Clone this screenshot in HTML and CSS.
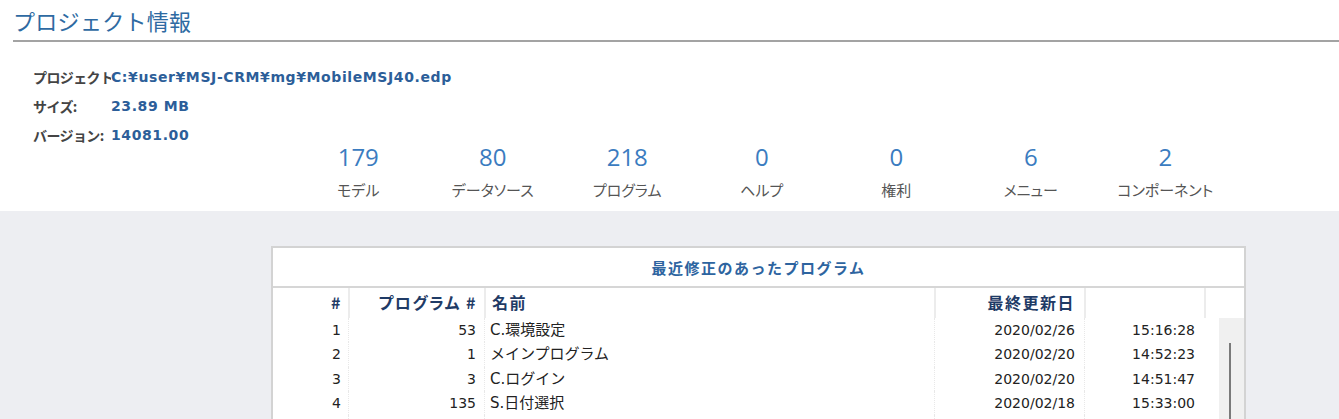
FILE: index.html
```html
<!DOCTYPE html>
<html lang="ja">
<head>
<meta charset="utf-8">
<title>プロジェクト情報</title>
<link rel="stylesheet" href="styles.css">
</head>
<body>
<div class="top">
  <h1 class="title">プロジェクト情報</h1>
  <div class="info">
    <div class="info-row"><span class="info-label">プロジェクト:</span><span class="info-value">C:¥user¥MSJ-CRM¥mg¥MobileMSJ40.edp</span></div>
    <div class="info-row"><span class="info-label">サイズ:</span><span class="info-value">23.89 MB</span></div>
    <div class="info-row"><span class="info-label">バージョン:</span><span class="info-value">14081.00</span></div>
  </div>
  <div class="stats">
    <div class="stat"><div class="stat-num">179</div><div class="stat-label">モデル</div></div>
    <div class="stat"><div class="stat-num">80</div><div class="stat-label">データソース</div></div>
    <div class="stat"><div class="stat-num">218</div><div class="stat-label">プログラム</div></div>
    <div class="stat"><div class="stat-num">0</div><div class="stat-label">ヘルプ</div></div>
    <div class="stat"><div class="stat-num">0</div><div class="stat-label">権利</div></div>
    <div class="stat"><div class="stat-num">6</div><div class="stat-label">メニュー</div></div>
    <div class="stat"><div class="stat-num">2</div><div class="stat-label">コンポーネント</div></div>
  </div>
</div>
<div class="bottom">
  <div class="panel">
    <div class="panel-title">最近修正のあったプログラム</div>
    <div class="thead">
      <div class="th c1">#</div>
      <div class="th c2">プログラム #</div>
      <div class="th c3 left">名前</div>
      <div class="th c4">最終更新日</div>
      <div class="th c5"></div>
      <div class="th c6"></div>
    </div>
    <div class="tbody-wrap">
      <div class="tbody">
        <div class="tr"><div class="td c1">1</div><div class="td c2">53</div><div class="td c3 left">C.環境設定</div><div class="td c4">2020/02/26</div><div class="td c5">15:16:28</div></div>
        <div class="tr"><div class="td c1">2</div><div class="td c2">1</div><div class="td c3 left">メインプログラム</div><div class="td c4">2020/02/20</div><div class="td c5">14:52:23</div></div>
        <div class="tr"><div class="td c1">3</div><div class="td c2">3</div><div class="td c3 left">C.ログイン</div><div class="td c4">2020/02/20</div><div class="td c5">14:51:47</div></div>
        <div class="tr"><div class="td c1">4</div><div class="td c2">135</div><div class="td c3 left">S.日付選択</div><div class="td c4">2020/02/18</div><div class="td c5">15:33:00</div></div>
        <div class="tr"><div class="td c1">5</div><div class="td c2">42</div><div class="td c3 left">C.簡易日報</div><div class="td c4">2020/02/18</div><div class="td c5">15:20:11</div></div>
      </div>
      <div class="scrollbar"><div class="thumb"></div></div>
    </div>
  </div>
</div>
</body>
</html>
```
FILE: styles.css
```css
* { box-sizing: border-box; }
html, body { margin: 0; padding: 0; }
body {
  width: 1339px;
  height: 419px;
  overflow: hidden;
  background: #edeef2;
  font-family: "DejaVu Sans", "Noto Sans CJK JP", sans-serif;
}
.top {
  background: #ffffff;
  height: 211px;
}
.title {
  margin: 0 0 0 13px;
  padding-top: 4px;
  height: 42px;
  font-family: "Noto Sans CJK JP", sans-serif;
  font-weight: normal;
  font-size: 22px;
  line-height: 32px;
  color: #2e6aa2;
  border-bottom: 2px solid #a3a3a3;
  letter-spacing: 0.3px;
}
.info {
  margin-top: 20px;
  padding-left: 33px;
}
.info-row {
  display: flex;
  height: 29px;
  align-items: center;
}
.info-label {
  flex: 0 0 78px;
  width: 78px;
  white-space: nowrap;
  overflow: hidden;
  font-family: "Noto Sans CJK JP", sans-serif;
  font-weight: bold;
  font-size: 14px;
  color: #444;
  letter-spacing: -0.6px;
}
.info-value {
  font-family: "DejaVu Sans", sans-serif;
  font-weight: bold;
  font-size: 14px;
  letter-spacing: 0.6px;
  color: #2c5e99;
}
.stats {
  display: flex;
  margin-left: 291px;
  margin-top: -8px;
}
.stat {
  width: 134.5px;
  text-align: center;
}
.stat-num {
  font-family: "Open Sans", sans-serif;
  font-size: 24px;
  line-height: 32px;
  color: #3b7cc0;
}
.stat-label {
  margin-top: 7px;
  font-family: "Noto Sans CJK JP", sans-serif;
  font-feature-settings: "palt";
  font-size: 15px;
  line-height: 20px;
  color: #555;
}
.bottom {
  padding: 35px 0 0 271px;
}
.panel {
  width: 975px;
  height: 200px;
  background: #fff;
  border: 2px solid #d3d3d3;
  border-bottom: none;
}
.panel-title {
  height: 40px;
  line-height: 40px;
  text-align: center;
  font-family: "Noto Sans CJK JP", sans-serif;
  font-weight: bold;
  font-size: 15px;
  color: #2d64a0;
  border-bottom: 2px solid #d6d6d6;
  letter-spacing: 1.5px;
}
.thead {
  display: grid;
  grid-template-columns: 75px 136px 450px 150px 120px 40px;
  height: 30px;
}
.th {
  font-family: "Noto Sans CJK JP", sans-serif;
  font-feature-settings: "palt";
  font-weight: bold;
  font-size: 16px;
  letter-spacing: 1.5px;
  color: #1f3b66;
  line-height: 28px;
  text-align: right;
  border-left: 2px solid #ececec;
}
.th.c1 { border-left: none; padding-right: 6px; }
.th.c2 { padding-right: 7px; }
.th.c3 { padding-left: 6px; }
.th.c4 { padding-right: 9px; }
.left { text-align: left !important; }
.tbody-wrap {
  display: flex;
}
.tbody {
  width: 946px;
}
.tr {
  display: grid;
  grid-template-columns: 75px 136px 450px 150px 135px;
  height: 24.3px;
}
.td {
  font-family: "DejaVu Sans", "Noto Sans CJK JP", sans-serif;
  font-size: 14px;
  line-height: 24px;
  color: #222;
  text-align: right;
  border-left: 1px dotted #e8e8e8;
  white-space: nowrap;
}
.td.c1 { border-left: none; padding-right: 7px; }
.td.c2 { padding-right: 8px; }
.td.c3 { padding-left: 5px; font-size: 15px; }
.td.c4 { padding-right: 9px; }
.td.c5 { padding-right: 24px; border-left: 1px dotted #e8e8e8; }
.scrollbar {
  width: 25px;
  height: 120px;
  background: #f0f0f0;
  position: relative;
}
.thumb {
  position: absolute;
  left: 10px;
  top: 25px;
  width: 2px;
  height: 100px;
  background: #7a7a7a;
}
```
